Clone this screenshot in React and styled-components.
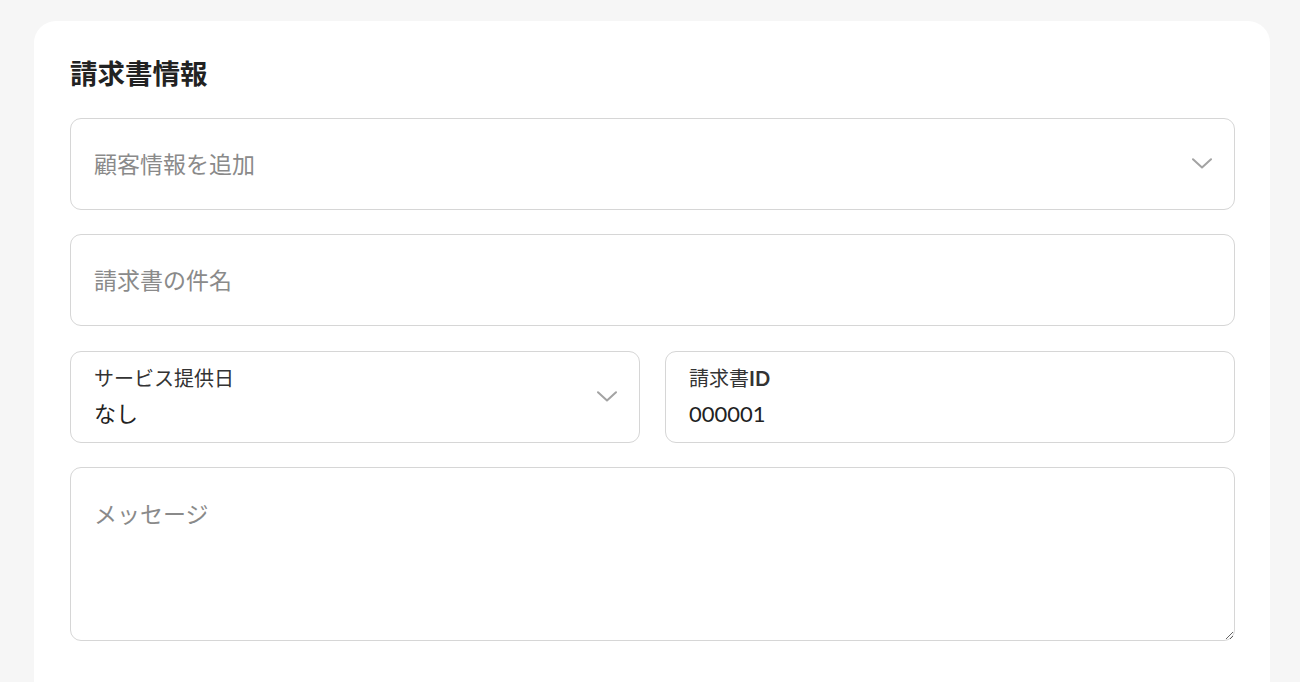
import React from "react";
import styled, { createGlobalStyle } from "styled-components";

const Global = createGlobalStyle`
  * { box-sizing: border-box; }
  html, body { margin: 0; padding: 0; background: #f6f6f6; }
  body { font-family: Lato, "Noto Sans CJK JP", sans-serif; color: #222; }
`;

const Page = styled.div`
  padding: 21px 30px 0 34px;
  height: 682px;
  overflow: hidden;
`;

const Card = styled.section`
  background: #fff;
  border-radius: 22px 22px 0 0;
  width: 1236px;
  min-height: 700px;
  padding: 33px 35px 40px 36px;
  display: flex;
  flex-direction: column;
  gap: 24.5px;
`;

const Title = styled.h2`
  margin: 0;
  font-size: 27.5px;
  line-height: 39px;
  font-weight: 700;
  color: #222;
`;

const Field = styled.div`
  position: relative;
  height: 92px;
  border: 1px solid #d6d6d6;
  border-radius: 11px;
  background: #fff;
  display: flex;
  align-items: center;
  padding: 0 22px 0 23px;
  gap: 12px;
`;

const Placeholder = styled.span`
  flex: 1;
  font-size: 23px;
  line-height: 32px;
  color: #8a8a8a;
`;

const Row = styled.div`
  display: grid;
  grid-template-columns: 1fr 1fr;
  gap: 25px;
`;

const Stack = styled.div`
  flex: 1;
  display: flex;
  flex-direction: column;
  gap: 6px;
`;

const Label = styled.span`
  font-size: 20px;
  line-height: 28px;
  color: #333;
  b { font-weight: 700; }
`;

const Value = styled.span`
  font-size: 22px;
  line-height: 31px;
  color: #222;
`;

const Message = styled.textarea`
  display: block;
  width: 100%;
  height: 174px;
  border: 1px solid #d6d6d6;
  border-radius: 11px;
  padding: 30px 23px;
  font-family: Lato, "Noto Sans CJK JP", sans-serif;
  font-size: 23px;
  line-height: 32px;
  color: #222;
  outline: none;
  resize: vertical;
  &::placeholder { color: #8a8a8a; }
`;

const Chevron = () => (
  <svg width="20" height="11" viewBox="0 0 20 11" fill="none">
    <path d="M1 1.2 L10 9.5 L19 1.2" stroke="#a3a3a3" strokeWidth="2" strokeLinecap="round" strokeLinejoin="round" />
  </svg>
);

export default function App() {
  return (
    <>
      <Global />
      <Page>
        <Card>
          <Title>請求書情報</Title>
          <Field>
            <Placeholder>顧客情報を追加</Placeholder>
            <Chevron />
          </Field>
          <Field>
            <Placeholder>請求書の件名</Placeholder>
          </Field>
          <Row>
            <Field>
              <Stack>
                <Label>サービス提供日</Label>
                <Value>なし</Value>
              </Stack>
              <Chevron />
            </Field>
            <Field>
              <Stack>
                <Label>請求書<b>ID</b></Label>
                <Value>000001</Value>
              </Stack>
            </Field>
          </Row>
          <Message placeholder="メッセージ" />
        </Card>
      </Page>
    </>
  );
}
